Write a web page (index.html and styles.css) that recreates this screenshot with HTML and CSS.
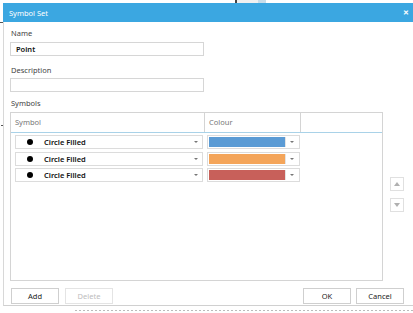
FILE: index.html
```html
<!DOCTYPE html>
<html>
<head>
<meta charset="utf-8">
<link rel="stylesheet" href="styles.css">
</head>
<body>
<div class="screen">
  <div class="bg-mark mark-top-a"></div>
  <div class="bg-mark mark-top-b"></div>
  <div class="bg-mark mark-top-c"></div>
  <div class="bg-mark mark-left-a"></div>
  <div class="bg-mark mark-left-b"></div>
  <div class="bg-mark mark-bottom"></div>

  <div class="dialog">
    <div class="titlebar">
      <span class="title">Symbol Set</span>
      <span class="close">✕</span>
    </div>
    <div class="content">
      <div class="label label-name">Name</div>
      <div class="input">Point</div>
      <div class="label label-desc">Description</div>
      <div class="input input-desc"></div>
      <div class="label label-sym">Symbols</div>

      <div class="table-area">
        <div class="table">
          <div class="thead">
            <div class="th">Symbol</div>
            <div class="th">Colour</div>
            <div class="th th-last"></div>
          </div>
          <div class="tbody">
            <div class="row">
              <div class="combo">
                <span class="dot"></span><span class="ctext">Circle Filled</span><span class="arrow"></span>
              </div>
              <div class="combo colour-combo">
                <span class="swatch sw-blue"></span><span class="arrow"></span>
              </div>
            </div>
            <div class="row">
              <div class="combo">
                <span class="dot"></span><span class="ctext">Circle Filled</span><span class="arrow"></span>
              </div>
              <div class="combo colour-combo">
                <span class="swatch sw-orange"></span><span class="arrow"></span>
              </div>
            </div>
            <div class="row">
              <div class="combo">
                <span class="dot"></span><span class="ctext">Circle Filled</span><span class="arrow"></span>
              </div>
              <div class="combo colour-combo">
                <span class="swatch sw-red"></span><span class="arrow"></span>
              </div>
            </div>
          </div>
        </div>
        <div class="side">
          <div class="sbtn"><span class="tri-up"></span></div>
          <div class="sbtn"><span class="tri-down"></span></div>
        </div>
      </div>

      <div class="footer">
        <div class="btn">Add</div>
        <div class="btn btn-disabled">Delete</div>
        <div class="spacer"></div>
        <div class="btn">OK</div>
        <div class="btn">Cancel</div>
      </div>
    </div>
  </div>
</div>
</body>
</html>
```

FILE: styles.css
```css
html, body {
  margin: 0;
  padding: 0;
  background: #fff;
}

.screen {
  position: relative;
  width: 413px;
  height: 313px;
  overflow: hidden;
  background: #fff;
  font-family: "Segoe UI", "Noto Sans", "Open Sans", sans-serif;
  font-size: 7.5px;
  color: #333;
}

/* background desktop marks peeking around the dialog */
.bg-mark { position: absolute; }
.mark-top-a { left: 235px; top: 0; width: 2px; height: 3px; background: #444; }
.mark-top-b { left: 237px; top: 0; width: 21px; height: 3px; background: #f0f0f0; }
.mark-top-c { left: 258px; top: 0; width: 8px; height: 3px; background: #c8ddea; }
.mark-left-a { left: 0; top: 22px; width: 3px; height: 1px; background: #555; }
.mark-left-b { left: 1px; top: 125px; width: 2px; height: 1px; background: #555; }
.mark-bottom {
  left: 75px; top: 310px; width: 338px; height: 1px;
  background: repeating-linear-gradient(90deg, #bbb 0 2px, transparent 2px 4px);
}

.dialog {
  margin: 3px 0 0 3px;
  width: 410px;
  height: 303px;
  box-sizing: border-box;
  border-left: 1px solid #d8d8d8;
  border-bottom: 1px solid #d0d0d0;
  background: #fff;
  display: flex;
  flex-direction: column;
}

.titlebar {
  height: 19px;
  margin-left: -1px;
  background: #3ba7e1;
  display: flex;
  align-items: center;
  justify-content: space-between;
  padding: 0 4px 0 6px;
  color: #fff;
}
.title { font-size: 7.5px; }
.close { font-size: 7px; font-weight: bold; }

.content {
  flex: 1;
  display: flex;
  flex-direction: column;
  padding: 6px 9px 0 6px;
}

.label {
  height: 10px;
  line-height: 10px;
  padding-left: 1px;
  color: #444;
}
.label-name { margin-bottom: 4px; }
.label-desc { margin-top: 9px; margin-bottom: 3px; }
.label-sym { margin-top: 6px; margin-bottom: 4px; }

.input {
  width: 194px;
  height: 14px;
  box-sizing: border-box;
  border: 1px solid #d6d6d6;
  line-height: 12px;
  padding-left: 5px;
  color: #111;
  font-weight: 600;
}

.table-area {
  display: flex;
  align-items: center;
}

.table {
  width: 374px;
  height: 169px;
  box-sizing: border-box;
  border: 1px solid #d4d4d4;
  display: flex;
  flex-direction: column;
}

.thead {
  display: grid;
  grid-template-columns: 194px 96px 1fr;
  height: 19px;
  border-bottom: 1px solid #a9d2e8;
}
.th {
  border-right: 1px solid #d4d4d4;
  line-height: 19px;
  padding-left: 4px;
  color: #777;
}
.th-last { border-right: none; }

.tbody {
  display: flex;
  flex-direction: column;
  gap: 2.5px;
  padding-top: 2px;
}

.row {
  display: grid;
  grid-template-columns: 194px 96px;
}

.combo {
  height: 14px;
  box-sizing: border-box;
  border: 1px solid #dcdcdc;
  margin: 0 2px 0 4px;
  display: flex;
  align-items: center;
  background: #fff;
}
.dot {
  width: 6px;
  height: 6px;
  border-radius: 50%;
  background: #000;
  margin-left: 11px;
}
.ctext {
  margin-left: 11px;
  flex: 1;
  color: #111;
  font-weight: 600;
}
.arrow {
  width: 0;
  height: 0;
  border-left: 2px solid transparent;
  border-right: 2px solid transparent;
  border-top: 2px solid #777;
  margin-right: 4px;
}

.colour-combo {
  margin: 0 1px 0 2px;
  padding: 1px;
}
.swatch {
  width: 78px;
  height: 100%;
  margin-right: 4px;
  border-right: 1px solid #e4e4e4;
}
.sw-blue { background: #5b9bd5; }
.sw-orange { background: #f4a55a; }
.sw-red { background: #c8605a; }

.side {
  margin-left: 7px;
  display: flex;
  flex-direction: column;
  gap: 7px;
  margin-top: -4px;
}
.sbtn {
  width: 14px;
  height: 14px;
  box-sizing: border-box;
  border: 1px solid #e0e0e0;
  display: flex;
  align-items: center;
  justify-content: center;
}
.tri-up {
  width: 0; height: 0;
  border-left: 3px solid transparent;
  border-right: 3px solid transparent;
  border-bottom: 4px solid #b0b0b0;
}
.tri-down {
  width: 0; height: 0;
  border-left: 3px solid transparent;
  border-right: 3px solid transparent;
  border-top: 4px solid #b0b0b0;
}

.footer {
  display: flex;
  margin-top: 7px;
  padding-left: 1px;
  gap: 6px;
}
.spacer { flex: 1; }
.btn {
  width: 48px;
  height: 16px;
  box-sizing: border-box;
  border: 1px solid #cfcfcf;
  text-align: center;
  line-height: 14px;
  color: #222;
}
.btn-disabled {
  border-color: #e4e4e4;
  color: #bdbdbd;
}
.footer .btn:last-child { margin-left: -1px; }
```
